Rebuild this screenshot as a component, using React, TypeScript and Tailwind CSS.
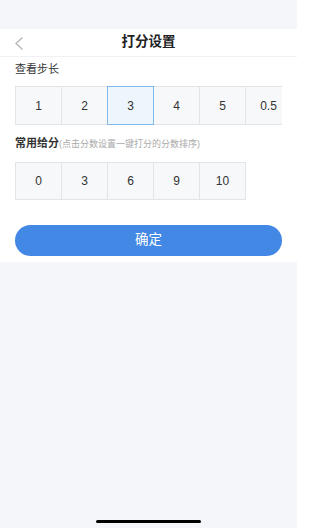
import { useState } from "react";

// 打分设置 page: step picker + common scores, confirm button.

const steps = ["1", "2", "3", "4", "5", "0.5"];
const scores = ["0", "3", "6", "9", "10"];

function Cell({ label, active, onClick }: { label: string; active?: boolean; onClick?: () => void }) {
  return (
    <button
      type="button"
      onClick={onClick}
      className={
        active
          ? "relative z-10 -ml-px flex w-[47px] shrink-0 items-center justify-center border border-[#80b9ec] bg-[#eef6fd] text-[12px] text-[#333]"
          : "-ml-px flex w-[47px] shrink-0 items-center justify-center border border-[#e3e4e8] bg-[#f7f8fa] text-[12px] text-[#333] first:ml-0"
      }
    >
      {label}
    </button>
  );
}

export default function App() {
  const [step, setStep] = useState("3");

  return (
    <div
      className="flex min-h-[528px] w-[297px] flex-col overflow-hidden bg-[#f5f6fa]"
      style={{ fontFamily: '"Liberation Sans", "Noto Sans CJK SC", sans-serif' }}
    >
      <div className="h-[29px]" />

      <div className="bg-white">
        <div className="relative flex h-[28px] items-center justify-center border-b border-[#f1f1f3]">
          <svg
            className="absolute left-[14px] top-[8px]"
            width="10"
            height="13"
            viewBox="0 0 10 13"
            fill="none"
          >
            <path d="M8 1L2 6.5L8 12" stroke="#b8b8bd" strokeWidth="1.5" strokeLinecap="round" strokeLinejoin="round" />
          </svg>
          <span className="text-[13.5px] font-bold text-[#222]">打分设置</span>
        </div>

        <div className="px-[15px] pb-[6px]">
          <div className="pt-[5px] text-[11px] leading-[14px] text-[#333]">查看步长</div>
          <div className="mt-[10px] flex h-[39px] overflow-hidden">
            {steps.map((s) => (
              <Cell key={s} label={s} active={s === step} onClick={() => setStep(s)} />
            ))}
          </div>

          <div className="mt-[11px] flex items-baseline text-[11px] leading-[14px]">
            <span className="font-bold text-[#333]">常用给分</span>
            <span className="text-[9px] text-[#aaa]">(点击分数设置一键打分的分数排序)</span>
          </div>
          <div className="mt-[11px] flex h-[38px]">
            {scores.map((s) => (
              <Cell key={s} label={s} />
            ))}
          </div>

          <button
            type="button"
            className="mt-[25px] flex h-[31px] w-full items-center justify-center rounded-full bg-[#4388e5] text-[13.5px] text-white"
          >
            确定
          </button>
        </div>
      </div>

      <div className="flex-1" />
      <div className="flex justify-center pb-[5px]">
        <div className="h-[3px] w-[105px] rounded-full bg-black" />
      </div>
    </div>
  );
}
